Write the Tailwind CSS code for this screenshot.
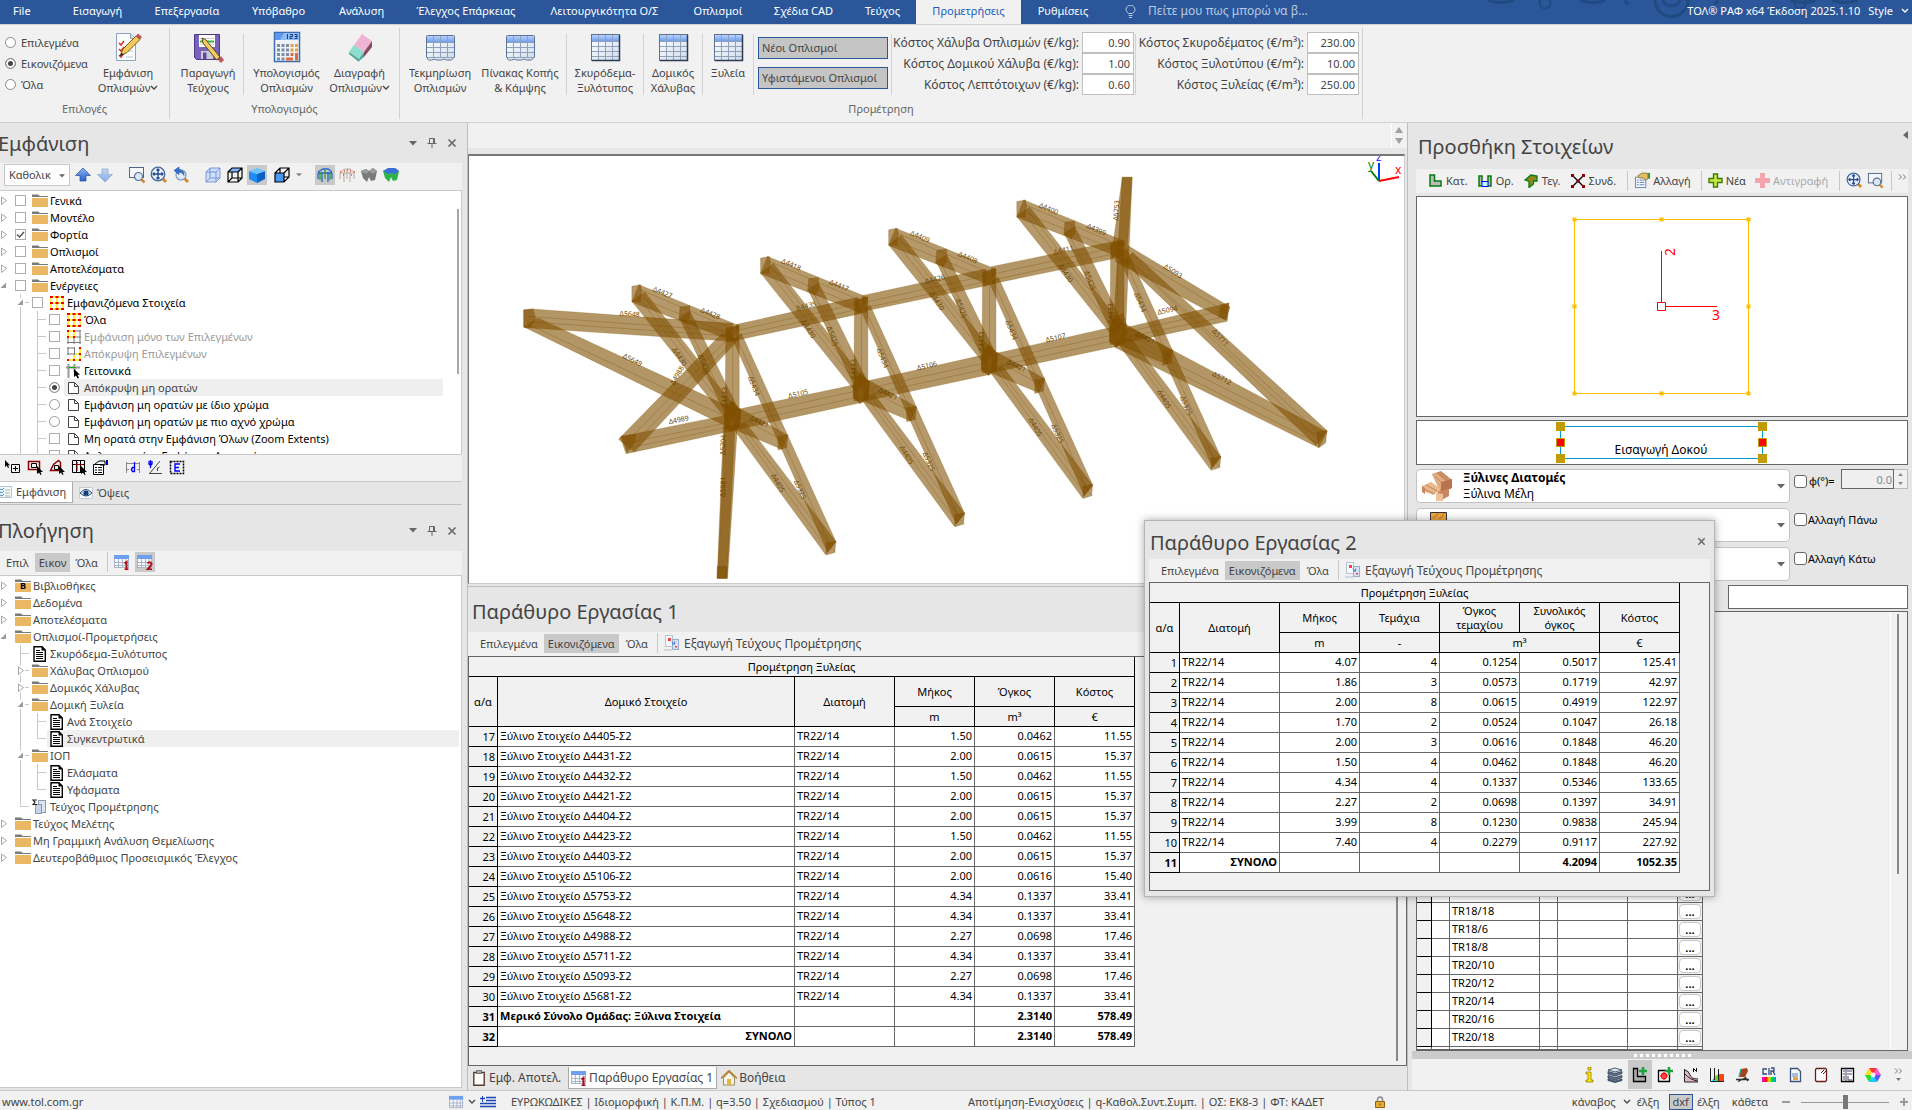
<!DOCTYPE html>
<html lang="el">
<head>
<meta charset="utf-8">
<title>ΤΟΛ ΡΑΦ</title>
<script src="https://cdn.jsdelivr.net/npm/@tailwindcss/browser@4"></script>
</head>
<body class="flex h-screen flex-col overflow-hidden bg-[#e6e6e6] font-['Noto_Sans','Open_Sans',sans-serif] text-[11px] leading-4 text-[#444]">

<svg class="absolute size-0" aria-hidden="true">
  <defs>
    <linearGradient id="gHead" x1="0" x2="0" y1="0" y2="1"><stop offset="0" stop-color="#b9d2fb"/><stop offset="1" stop-color="#6f9ff0"/></linearGradient>
    <linearGradient id="gCell" x1="0" x2="1" y1="0" y2="1"><stop offset="0" stop-color="#fff"/><stop offset="1" stop-color="#cfdcec"/></linearGradient>
    <linearGradient id="gBlue" x1="0" x2="0" y1="0" y2="1"><stop offset="0" stop-color="#8bb4f4"/><stop offset="1" stop-color="#2a62cc"/></linearGradient>
    <linearGradient id="gPale" x1="0" x2="0" y1="0" y2="1"><stop offset="0" stop-color="#c3d6f7"/><stop offset="1" stop-color="#86a8e2"/></linearGradient>
    <linearGradient id="gRain" x1="0" x2="1"><stop offset="0" stop-color="#f0f"/><stop offset=".3" stop-color="#f00"/><stop offset=".5" stop-color="#fd0"/><stop offset=".7" stop-color="#0d3"/><stop offset="1" stop-color="#09f"/></linearGradient>

    <symbol id="sheet" viewBox="0 0 32 32"><rect x="2.500" y="3.500" width="28" height="26" fill="url(#gCell)" stroke="#5d7393"/><rect x="3" y="4" width="27" height="6" fill="url(#gHead)"/><path d="M3 10.500h27M3 15.500h27M3 20.500h27M3 25.500h27M9.500 4v25M16.500 4v25M23.500 4v25" stroke="#8fa0b8" fill="none"/><path d="M30.500 4v25.500H3" stroke="#2c3c55" stroke-width="1.500" fill="none"/></symbol>
    <symbol id="sheetTorn" viewBox="0 0 32 32"><path d="M2.500 5.500q0-1 1-1h26q1 0 1 1V26l-3 3h-5l-2-1-3 1h-5l-2-1-3 1h-3l-2-3z" fill="url(#gCell)" stroke="#5d7393"/><path d="M3 5h27v6H3z" fill="url(#gHead)"/><path d="M3 11.500h27M3 16.500h27M3 21.500h27M3 26.500h27M9.500 5v21M16.500 5v21M23.500 5v21" stroke="#8fa0b8" fill="none"/></symbol>
    <symbol id="mini" viewBox="0 0 16 16"><rect x=".5" y="1.500" width="14" height="12" fill="#f7f9fc" stroke="#a9b4c6"/><path d="M0 1h15v4H0z" fill="#6f9ff0"/><path d="M0 8.500h15M0 11.500h15M4.500 5v9M8.500 5v9M12 5v9" stroke="#a9b4c6" fill="none"/></symbol>
    <symbol id="digit1" viewBox="0 0 16 16"><path d="M10.500 9.500L12.500 8v7.500M10.500 15.500h4" stroke="#b00d18" stroke-width="2" fill="none"/></symbol>
    <symbol id="digit2" viewBox="0 0 16 16"><path d="M10.500 9.500q2-2.500 4 0 0 2-4 6h4.500" stroke="#b00d18" stroke-width="2" fill="none"/></symbol>
    <symbol id="folder" viewBox="0 0 16 16"><path d="M0 1.500h6l2 1.500h8v1H0z" fill="#7a7a7a"/><path d="M0 5h16v9H0z" fill="#eab765"/></symbol>
    <symbol id="page" viewBox="0 0 16 16"><path d="M2.500 2.500h6l4 4v7h-10zM8.500 2.500v4h4" fill="#fff" stroke="#444" stroke-linejoin="round"/></symbol>
    <symbol id="doc" viewBox="0 0 16 16"><path d="M2 .7h8l3.300 3.300v11.300H2z" fill="#fff" stroke="#000" stroke-width="1.400"/><path d="M9.500.5v4h4z"/><path d="M4 4.500h4M4 6.500h7M4 8.500h7M4 10.500h7M4 12.500h7" stroke="#000"/></symbol>
    <symbol id="sumdoc" viewBox="0 0 16 16"><rect x="6.500" y="1.500" width="7" height="12" fill="#dce5ef" stroke="#8c9bb0"/><rect x="3.500" y="5.500" width="6" height="9" fill="#c5d4e6" stroke="#8c9bb0"/><path d="M5 1H1l2 2.300L1 5.500h4" fill="none" stroke="#222" stroke-width="1.200"/></symbol>
    <symbol id="gridY" viewBox="0 0 16 16"><path d="M1 2h14M1 8h14M1 14h14M2 1v14M8 1v14M14 1v14" stroke="#fbe800" stroke-width="1.500" fill="none"/><g fill="#e00"><path d="M1 1h3v2H1zM6.500 1h3v2h-3zM12 1h3v2h-3zM1 7h3v2H1zM6.500 7h3v2h-3zM12 7h3v2h-3zM1 13h3v2H1zM6.500 13h3v2h-3zM12 13h3v2h-3z"/></g></symbol>
    <symbol id="gridTL" viewBox="0 0 16 16"><path d="M8 2h7M1 13.500h14M2 8v7M8 8v7M14 1v14M8 8h7" stroke="#777" fill="none"/><path d="M1 2h7M1 8h7M2 1v7M8 1v7" stroke="#fbe800" stroke-width="1.500" fill="none"/><path d="M1 1h2v2H1zM7 1h2v2H7zM1 7h2v2H1zM7 7h2v2H7z" fill="#e00"/></symbol>
    <symbol id="gridBR" viewBox="0 0 16 16"><path d="M1 2h8M1 8h8M2 1v8M8.500 1v8" stroke="#777" fill="none"/><path d="M1 14h14M14 1v14M8 9v5M9 8h5" stroke="#fbe800" stroke-width="1.500" fill="none"/><path d="M13 1h2v2h-2zM13 7h2v2h-2zM1 13h2v2H1zM7 13h2v2H7zM13 13h2v2h-2z" fill="#e00"/></symbol>
    <symbol id="near" viewBox="0 0 16 16"><path d="M2.500 1v14M8.500 1v8M0 4.500h14" stroke="#999" stroke-width="2"/><path d="M3 4.500h6" stroke="#0a0"/><path d="M8 6v8l2-1.500 1.500 3 1.500-.7-1.500-3H14z" fill="#000"/></symbol>
    <symbol id="gv" viewBox="0 0 17 17"><path d="M8.500 0v17" stroke="#c8c8c8"/></symbol>
    <symbol id="gh" viewBox="0 0 17 17"><path d="M8.500 0v17M8.500 8.500H17" stroke="#c8c8c8" fill="none"/></symbol>
    <symbol id="gl" viewBox="0 0 17 17"><path d="M8.500 0v8.500H17" stroke="#c8c8c8" fill="none"/></symbol>
    <symbol id="gc" viewBox="0 0 17 17"><path d="M6.500 5v7.500l5-4z" fill="#fff" stroke="#a6a6a6"/></symbol>
    <symbol id="go" viewBox="0 0 17 17"><path d="M11 5.500V11H5.500z" fill="#9a9a9a"/></symbol>
    <symbol id="gC" viewBox="0 0 17 17"><path d="M8.500 0v3.500M8.500 13.500v4M13 8.500h4" stroke="#c8c8c8"/><path d="M6.500 5v7.500l5-4z" fill="#fff" stroke="#a6a6a6"/></symbol>
    <symbol id="gO" viewBox="0 0 17 17"><path d="M8.500 0v3.500M8.500 13v4M13 8.500h4" stroke="#c8c8c8"/><path d="M11 5.500V11H5.500z" fill="#9a9a9a"/></symbol>
    <symbol id="cross" viewBox="0 0 10 10"><path d="M1.500 1.500l7 7M8.500 1.500l-7 7" stroke="#666" stroke-width="1.600"/></symbol>
    <symbol id="pin" viewBox="0 0 10 12"><path d="M2.500 1.500h5v5h-5zM6.500 1.500v5M.5 6.500h9M5 7v4" stroke="#666" fill="none"/></symbol>
    <symbol id="tri" viewBox="0 0 8 5"><path d="M0 0h8L4 4.500z" fill="#666"/></symbol>
    <symbol id="chev" viewBox="0 0 8 6"><path d="M1 1l3 3 3-3" fill="none" stroke="currentColor" stroke-width="1.300"/></symbol>
    <symbol id="zoomfit" viewBox="0 0 18 18"><path d="M12 12l4 4" stroke="#d98a2b" stroke-width="3"/><circle cx="8" cy="8" r="6.800" fill="#e9f0fb" stroke="#47689c" stroke-width="1.300"/><path d="M8 3v10M3 8h10M6.500 4.500L8 3l1.500 1.500M6.500 11.500L8 13l1.500-1.500M4.500 6.500L3 8l1.500 1.500M11.500 6.500L13 8l-1.500 1.500" stroke="#234a8c" stroke-width="1.300" fill="none"/></symbol>
    <symbol id="zoomwin" viewBox="0 0 18 18"><rect x="1.500" y="1.500" width="14" height="10" fill="#f5f8fc" stroke="#4f6789"/><path d="M13 13l3.500 3.500" stroke="#d98a2b" stroke-width="2.500"/><circle cx="10.500" cy="10.500" r="4" fill="#dbe8f8" stroke="#5b7296" stroke-width="1.200"/></symbol>
    <symbol id="zoomprev" viewBox="0 0 18 18"><path d="M12 12l4 4" stroke="#d98a2b" stroke-width="3"/><circle cx="9" cy="9" r="5" fill="#e3edf9" stroke="#8095b5" stroke-width="1.200"/><path d="M2 4.500L7 1v2.500q5 0 5 6Q10.500 6 7 6v2.500z" fill="#3271cf" stroke="#1d4a99" stroke-width=".6"/></symbol>
    <symbol id="export" viewBox="0 0 16 16"><rect x="1.500" y=".5" width="7" height="11" fill="#f7f9fc" stroke="#b8c4d6"/><rect x="8.500" y="4.500" width="6" height="10" fill="#d3e0f2" stroke="#9aaeca"/><path d="M4 3h3v3H4zM11 11h2v1.500h-2z" fill="#e44"/><path d="M7.500 7l3 2M10.500 6.500V9H8" stroke="#4a7fd8" fill="none"/><path d="M0 15h8" stroke="#b5bfcc"/></symbol>
    <symbol id="props" viewBox="0 0 18 18"><rect x="1.500" y="5.500" width="11" height="11" fill="#f5f8fc" stroke="#7084a3"/><path d="M3 8.500h2M3 11h2M3 13.500h2M6 8.500h5M6 11h5M6 13.500h5" stroke="#5a82c0"/><path d="M4 4l5-3 6 .5V7l-3 2-2-3-4 .5z" fill="#e6bf63" stroke="#80622a" stroke-width=".8"/><path d="M14.500 1H17v6h-2.500z" fill="#4a8a3c"/></symbol>
  </defs>
</svg>

<!-- Menu bar -->
<nav class="relative flex h-6 shrink-0 items-stretch bg-[#2b579a] pb-[2px] text-white">
  <svg class="absolute right-0 top-0 h-6 w-[460px]" viewBox="0 0 460 24" fill="none" stroke="#1f4a82" stroke-width="3"><path d="M36 0q12 5 26 0M128 0q12 5 26 0M338 0q12 5 26 0M380 0q12 5 26 0" /><circle cx="93" cy="3" r="5.500" stroke-width="2"/><circle cx="348" cy="3" r="5.500" stroke-width="2"/><path d="M203 0a16 16 0 0 0 33 0M211 0a9 9 0 0 0 17 0M173 0q1 4 4 3M262 3q4 0 3-3"/></svg>
  <button class="w-14 pl-[13px] text-left">File</button>
  <button class="w-[83px]">Εισαγωγή</button>
  <button class="w-24">Επεξεργασία</button>
  <button class="w-[87px]">Υπόβαθρο</button>
  <button class="w-[79px]">Ανάλυση</button>
  <button class="w-[130px]">Έλεγχος Επάρκειας</button>
  <button class="w-[147px]">Λειτουργικότητα Ο/Σ</button>
  <button class="w-20">Οπλισμοί</button>
  <button class="w-[91px]">Σχέδια CAD</button>
  <button class="w-[67px]">Τεύχος</button>
  <button class="-mb-[2px] w-[105px] bg-[#f1f1f1] pb-[2px] text-[#2060b8]">Προμετρήσεις</button>
  <button class="w-[84px]">Ρυθμίσεις</button>
  <label class="ml-5 flex items-center gap-3 text-[12px] text-[#b9c9e2]">
    <svg class="h-[13px] w-[11px]" viewBox="0 0 11 13" fill="none" stroke="#b9c9e2"><path d="M3.500 8.500Q1 6.500 1 4.700a4.400 4.400 0 0 1 9 0q0 1.800-2.500 3.800zM3.500 10.500h4M4 12.500h3"/></svg>
    <input class="w-48 bg-transparent outline-none placeholder:text-[#b9c9e2]" placeholder="Πείτε μου πως μπορώ να β..." aria-label="Αναζήτηση εντολής">
  </label>
  <div class="relative ml-auto flex items-center gap-2 pr-[3px]"><span>ΤΟΛ® ΡΑΦ x64 Έκδοση 2025.1.10</span><button class="flex items-center gap-2">Style <svg class="h-[6px] w-2"><use href="#chev"/></svg></button></div>
</nav>

<!-- Ribbon -->
<section class="flex h-[99px] shrink-0 border-y border-[#d0d0d0] bg-[#f1f1f1]">
  <div class="my-[3px] flex w-[170px] flex-col border-r border-[#d2d2d2]">
    <div class="flex h-[73px]">
      <fieldset class="w-24 pt-1 pl-[5px]">
        <label class="flex h-[21px] items-center gap-[5px]"><input type="radio" name="scope" class="size-[11px] appearance-none rounded-full border border-[#8a8a8a] bg-white checked:bg-[#444] checked:shadow-[inset_0_0_0_2px_#fff]">Επιλεγμένα</label>
        <label class="flex h-[21px] items-center gap-[5px]"><input type="radio" name="scope" checked class="size-[11px] appearance-none rounded-full border border-[#8a8a8a] bg-white checked:bg-[#444] checked:shadow-[inset_0_0_0_2px_#fff]">Εικονιζόμενα</label>
        <label class="flex h-[21px] items-center gap-[5px]"><input type="radio" name="scope" class="size-[11px] appearance-none rounded-full border border-[#8a8a8a] bg-white checked:bg-[#444] checked:shadow-[inset_0_0_0_2px_#fff]">Όλα</label>
      </fieldset>
      <button class="flex w-16 flex-col items-center justify-start pt-[3px] leading-[15px]">
        <svg class="mb-[2px] size-8" viewBox="0 0 32 32"><path d="M4.500 2.500h14l5 5v22h-19z" fill="#fbfcfe" stroke="#8ea3bd"/><path d="M18.500 2.500v5h5" fill="#d5e0ee" stroke="#8ea3bd"/><path d="M7 12l2 2 3-4M7 18l2 2 3-4M7 24l2 2 3-4" stroke="#d33" stroke-width="1.600" fill="none"/><path d="M14 14h7M14 20h7M14 26h7" stroke="#b7c5d6"/><path d="M8 25l3-7L24 5l4 3.500L15 21.500z" fill="#f3c95c" stroke="#7a5a16"/><path d="M24 5l2-2.500 4 3.500-2 2.500z" fill="#c4505a"/><path d="M8 25l1.500-3.300 2.200 1.800z" fill="#222"/></svg>
        <span>Εμφάνιση</span><span class="flex items-center whitespace-nowrap">Οπλισμών<svg class="h-[6px] w-2"><use href="#chev"/></svg></span>
      </button>
    </div>
    <div class="text-center text-[#666]">Επιλογές</div>
  </div>
  <div class="my-[3px] flex w-[230px] flex-col border-r border-[#d2d2d2]">
    <div class="flex h-[73px]">
      <button class="ml-[3px] flex w-[70px] flex-col items-center justify-start pt-[3px] leading-[15px]">
        <svg class="mb-[2px] size-8" viewBox="0 0 32 32"><path d="M2.500 3.500h25v25h-23l-2-2z" fill="#7a63b8" stroke="#4d3a86"/><path d="M7 4h16v12H7z" fill="#fff"/><path d="M8 7.500h14M8 13h14" stroke="#c9c9d4"/><path d="M8 9.500h14v2H8z" fill="#3db53d"/><path d="M9 20h12v8H9z" fill="#c9cbd8"/><path d="M11 21.500h3.500V28H11z" fill="#5d4a99"/><path d="M10 7l4 2 14 17-3.500 3L11 12z" fill="#f0cc62" stroke="#5d4716"/><path d="M26 29l3 3 3-3-3-4z" fill="#b85a62"/></svg>
        <span>Παραγωγή</span><span>Τεύχους</span>
      </button>
      <div class="mt-[6px] h-[61px] w-px bg-[#d2d2d2]"></div>
      <button class="ml-[6px] flex w-[73px] flex-col items-center justify-start whitespace-nowrap pt-[3px] leading-[15px]">
        <svg class="mb-[2px] size-8" viewBox="0 0 32 32"><rect x="3.500" y="1.500" width="25" height="29" fill="#eef3fa" stroke="#3f6db3" stroke-width="1.500"/><path d="M4 2h24v7H4z" fill="#5b98ee"/><path d="M13 2h15v7H9z" fill="#8ebcf8"/><path d="M16.500 3v5M19 3.500h2.500v2H19v2h2.500M23.500 3.500H26v4h-2.500M24 5.500h2" stroke="#1b3a78" fill="none"/><g fill="#7c8ea6"><path d="M6 13h3v3H6zM10.500 13h3v3h-3zM6 17.500h3v3H6zM10.500 17.500h3v3h-3zM6 22h3v3H6zM10.500 22h3v3h-3zM15 17.500h3v3h-3zM15 13h3v3h-3zM15 22h3v3h-3z"/></g><path d="M19.500 13h3v3h-3zM24 13h3v3h-3zM19.500 17.500h3v3h-3zM24 17.500h3v3h-3z" fill="#ef9d3e"/><path d="M6 26.500h3v3H6zM10.500 26.500h3v3h-3z" fill="#7c8ea6"/><path d="M15 26.500h7v3h-7zM24 22h3v7.500h-3zM19.500 22h3v3h-3z" fill="#dd6a44"/></svg>
        <span>Υπολογισμός</span><span>Οπλισμών</span>
      </button>
      <button class="flex w-[73px] flex-col items-center justify-start whitespace-nowrap pt-[3px] leading-[15px]">
        <svg class="mb-[2px] size-8" viewBox="0 0 32 32"><path d="M18 3l10 7-8 11-10-7z" fill="#efb4d3"/><path d="M28 10v6l-8 10v-5z" fill="#8a4a5e"/><path d="M10 14l10 7-5 7-10-7z" fill="#8edccd"/><path d="M20 21v5l-5 4v-2zM5 21l10 7v3L5 23z" fill="#4fa595"/></svg>
        <span>Διαγραφή</span><span class="flex items-center">Οπλισμών<svg class="h-[6px] w-2"><use href="#chev"/></svg></span>
      </button>
    </div>
    <div class="text-center text-[#666]">Υπολογισμός</div>
  </div>
  <div class="my-[3px] flex w-[963px] flex-col border-r border-[#d2d2d2]">
    <div class="flex h-[73px]">
      <button class="flex w-20 flex-col items-center justify-start whitespace-nowrap pt-[3px] leading-[15px]"><svg class="mb-[2px] size-8"><use href="#sheetTorn"/></svg><span>Τεκμηρίωση</span><span>Οπλισμών</span></button>
      <button class="mr-[6px] flex w-20 flex-col items-center justify-start whitespace-nowrap pt-[3px] leading-[15px]"><svg class="mb-[2px] size-8"><use href="#sheetTorn"/></svg><span>Πίνακας Κοπής</span><span>&amp; Κάμψης</span></button>
      <div class="mt-[6px] h-[61px] w-px bg-[#d2d2d2]"></div>
      <button class="flex w-19 flex-col items-center justify-start whitespace-nowrap pt-[3px] leading-[15px]"><svg class="mb-[2px] size-8"><use href="#sheet"/></svg><span>Σκυρόδεμα-</span><span>Ξυλότυπος</span></button>
      <div class="mt-[6px] h-[61px] w-px bg-[#d2d2d2]"></div>
      <button class="flex w-[58px] flex-col items-center justify-start whitespace-nowrap pt-[3px] leading-[15px]"><svg class="mb-[2px] size-8"><use href="#sheet"/></svg><span>Δομικός</span><span>Χάλυβας</span></button>
      <div class="mt-[6px] h-[61px] w-px bg-[#d2d2d2]"></div>
      <button class="flex w-[50px] flex-col items-center justify-start pt-[3px] leading-[15px]"><svg class="mb-[2px] size-8"><use href="#sheet"/></svg><span>Ξυλεία</span></button>
      <div class="mt-[6px] h-[61px] w-px bg-[#d2d2d2]"></div>
      <div class="mr-[3px] ml-1 flex w-[130px] flex-col gap-2 pt-[9px]">
        <button class="h-[22px] border border-[#2b579a] bg-[#c5c5c5] px-[3px] text-left whitespace-nowrap">Νέοι Οπλισμοί</button>
        <button class="h-[22px] border border-[#2b579a] bg-[#c5c5c5] px-[3px] text-left whitespace-nowrap">Υφιστάμενοι Οπλισμοί</button>
      </div>
      <div class="mt-[6px] h-[61px] w-px bg-[#d2d2d2]"></div>
      <div class="flex w-[242px] flex-col pt-1 text-[12px]">
        <label class="flex h-[21px] items-center justify-end gap-[3px] whitespace-nowrap">Κόστος Χάλυβα Οπλισμών (€/kg):<input value="0.90" class="h-[21px] w-[52px] border border-[#c0c0c0] bg-white px-[3px] text-right text-[11px]"></label>
        <label class="flex h-[21px] items-center justify-end gap-[3px] whitespace-nowrap">Κόστος Δομικού Χάλυβα (€/kg):<input value="1.00" class="h-[21px] w-[52px] border border-[#c0c0c0] bg-white px-[3px] text-right text-[11px]"></label>
        <label class="flex h-[21px] items-center justify-end gap-[3px] whitespace-nowrap">Κόστος Λεπτότοιχων (€/kg):<input value="0.60" class="h-[21px] w-[52px] border border-[#c0c0c0] bg-white px-[3px] text-right text-[11px]"></label>
      </div>
      <div class="mt-[6px] ml-px h-[61px] w-px bg-[#d2d2d2]"></div>
      <div class="flex w-[223px] flex-col pt-1 text-[12px]">
        <label class="flex h-[21px] items-center justify-end gap-[3px] whitespace-nowrap">Κόστος Σκυροδέματος (€/m³):<input value="230.00" class="h-[21px] w-[52px] border border-[#c0c0c0] bg-white px-[3px] text-right text-[11px]"></label>
        <label class="flex h-[21px] items-center justify-end gap-[3px] whitespace-nowrap">Κόστος Ξυλοτύπου (€/m²):<input value="10.00" class="h-[21px] w-[52px] border border-[#c0c0c0] bg-white px-[3px] text-right text-[11px]"></label>
        <label class="flex h-[21px] items-center justify-end gap-[3px] whitespace-nowrap">Κόστος Ξυλείας (€/m³):<input value="250.00" class="h-[21px] w-[52px] border border-[#c0c0c0] bg-white px-[3px] text-right text-[11px]"></label>
      </div>
    </div>
    <div class="text-center text-[#666]">Προμέτρηση</div>
  </div>
</section>

<main class="relative flex min-h-0 flex-1">
  <!-- Left dock -->
  <aside class="flex w-[468px] shrink-0 flex-col overflow-hidden border-r border-[#bdbdbd] pr-[5px]">
    <div class="flex h-10 shrink-0 items-center">
      <h2 class="-ml-[2px] flex-1 pt-[2px] text-[20px]">Εμφάνιση</h2>
      <button class="px-[5px]" aria-label="Μενού"><svg class="h-[5px] w-2"><use href="#tri"/></svg></button>
      <button class="px-[5px]" aria-label="Καρφίτσωμα"><svg class="h-3 w-[10px]"><use href="#pin"/></svg></button>
      <button class="px-[5px]" aria-label="Κλείσιμο"><svg class="size-[10px]"><use href="#cross"/></svg></button>
    </div>
    <div class="flex h-[27px] shrink-0 items-center bg-[#f1f1f1] pb-[3px] pl-1">
      <span class="relative"><select aria-label="Προβολή" class="h-[22px] w-[66px] appearance-none overflow-hidden border border-[#c6c6c6] bg-white pl-1"><option>Καθολικ</option></select><svg class="absolute top-[10px] right-[5px] h-[4px] w-[6px]" viewBox="0 0 8 5"><path d="M0 0h8L4 4.500z" fill="#666"/></svg></span>
      <button class="ml-[5px]" aria-label="Πάνω"><svg class="size-4" viewBox="0 0 16 16"><path d="M8 1l7.500 7.500H11V14H5V8.500H.5z" fill="url(#gBlue)" stroke="#27509c" stroke-width=".7"/></svg></button>
      <button class="ml-[6px]" aria-label="Κάτω"><svg class="size-4" viewBox="0 0 16 16"><path d="M8 15L.5 7.500H5V2h6v5.500h4.500z" fill="url(#gPale)" stroke="#8aa4cf" stroke-width=".7"/></svg></button>
      <button class="ml-[15px]" aria-label="Μεγέθυνση παραθύρου"><svg class="size-[18px]"><use href="#zoomwin"/></svg></button>
      <button class="ml-1" aria-label="Όλα στην οθόνη"><svg class="size-[18px]"><use href="#zoomfit"/></svg></button>
      <button class="ml-1" aria-label="Προηγούμενη"><svg class="size-[18px]"><use href="#zoomprev"/></svg></button>
      <button class="ml-[15px]" aria-label="Διαφανές"><svg class="size-4" viewBox="0 0 16 16"><path d="M1 5l4-4h10v10l-4 4H1z" fill="#cfdffa"/><path d="M1 5l4-4h10v10l-4 4H1zM1 5h10v10M11 5l4-4M5 1v10L1 15M5 11h10" stroke="#5f86cf" fill="none" stroke-width=".8"/></svg></button>
      <button class="ml-[6px]" aria-label="Πλέγμα"><svg class="size-4" viewBox="0 0 16 16"><path d="M1 5l4-4h10l-4 4z" fill="#7fb2ff"/><path d="M1 5l4-4h10v10l-4 4H1zM1 5h10v10M11 5l4-4M5 5v6L1 15M5 11h10" stroke="#000" fill="none" stroke-width="1.200"/></svg></button>
      <button class="ml-1 bg-[#c9c9c9] p-[2px]" aria-label="Στερεό"><svg class="size-4" viewBox="0 0 16 16"><path d="M0 4l8 3v9l-8-4z" fill="#1e8cf5"/><path d="M8 7l8-3v8l-8 4z" fill="#0b62c9"/><path d="M0 4l8-3 8 3-8 3z" fill="#6cc3ff"/></svg></button>
      <button class="ml-[7px]" aria-label="Όψη"><svg class="size-4" viewBox="0 0 16 16"><path d="M1 6h9v9H1z" fill="#4a97f5"/><path d="M1 6l5-5h9v9l-5 5H1zM1 6h9v9M10 6l5-5M6 1v5M10 10h5" stroke="#000" fill="none" stroke-width="1.200"/></svg></button>
      <svg class="ml-[6px] h-[4px] w-[6px]" viewBox="0 0 8 5"><path d="M0 0h8L4 4.500z" fill="#888"/></svg>
      <button class="ml-[13px] bg-[#c9c9c9] p-[2px]" aria-label="Μοντέλο"><svg class="size-4" viewBox="0 0 16 16" fill="none"><path d="M1 5l5-3h5l4 3M1 6v6M5 5v10M11 5v10M15 6v6M1 6h14" stroke="#2b62c8" stroke-width="1.300"/><path d="M8 3v9M3 5v8M13 5v8" stroke="#2ba02b" stroke-width="1.300"/></svg></button>
      <button class="ml-1" aria-label="Σκελετός"><svg class="size-4" viewBox="0 0 16 16" fill="none"><path d="M1 5l5-3h5l4 3M1 6v6M5 5v10M11 5v10M15 6v6M1 6h14M8 3v9" stroke="#b9a79f"/><path d="M1 5h1M5 4h1M11 4h1M15 5h1M8 3h1M4 8h1M12 8h1" stroke="#e8552b" stroke-width="1.600"/></svg></button>
      <button class="ml-[6px]" aria-label="Γκρι"><svg class="size-4" viewBox="0 0 16 16"><path d="M0 4l5-2 3 2 4-3 4 3-2 9-4 1-2-4-2 5-4-4z" fill="#7a7a7a"/><path d="M0 4l5-2 3 2-3 3zM8 4l4-3 4 3-4 3z" fill="#9b9b9b"/></svg></button>
      <button class="ml-[6px]" aria-label="Χρώμα"><svg class="size-4" viewBox="0 0 16 16"><path d="M0 4l5-2 3 2 4-3 4 3-2 9-4 1-2-4-2 5-4-4z" fill="#2fb44a"/><path d="M0 4l5-3h7l4 3-4 3-4-1-3 1z" fill="#3a6fd8"/></svg></button>
    </div>
    <div class="relative h-[265px] shrink-0 overflow-hidden border border-l-0 border-[#c8c8c8] bg-white pt-px text-black">
      <ul id="treeView" class="-ml-[5px]"></ul>
      <div class="absolute top-[18px] right-[2px] h-[165px] w-[2px] bg-[#a8a8a8]"></div>
    </div>
    <div class="flex h-[27px] shrink-0 items-center border-b border-[#c8c8c8] bg-[#f1f1f1] pb-[3px] pl-1">
      <button aria-label="Επιλογή"><svg class="size-4" viewBox="0 0 16 16"><path d="M1 1v7l1.700-1.500L4 9l1-.5L4 6.200h2z"/><path d="M7.500 5.500h8v8h-8zM11.500 7v5M9 9.500h5" fill="none" stroke="#000"/></svg></button>
      <button class="ml-[7px]" aria-label="Παράθυρο"><svg class="size-4" viewBox="0 0 16 16" fill="none"><path d="M1.500 2.500h11v8h-11z" stroke="#8b0000" stroke-width="1.500"/><path d="M4.500 4.500h5v4h-5z" stroke="#000"/><path d="M10 7v8l2-1.500 1.500 2.500 1-.5-1-2.500H16z" fill="#000"/></svg></button>
      <button class="ml-[6px]" aria-label="Πολύγωνο"><svg class="size-4" viewBox="0 0 16 16" fill="none"><path d="M1.500 11.500l3-6 5-4 2 2v8z" stroke="#8b0000" stroke-width="1.500"/><path d="M5.500 6.500h4v4h-4z" stroke="#000"/><path d="M10 7v8l2-1.500 1.500 2.500 1-.5-1-2.500H16z" fill="#000"/></svg></button>
      <button class="ml-[6px]" aria-label="Τομή"><svg class="size-4" viewBox="0 0 16 16" fill="none"><path d="M1.500 1.500h12v12h-12zM5.500 1v13M9.500 1v13M1 5.500h13" stroke="#000"/><path d="M4 5.500h8M6 3v9" stroke="#8b0000"/><path d="M10 7v8l2-1.500 1.500 2.500 1-.5-1-2.500H16z" fill="#000"/></svg></button>
      <button class="ml-[5px]" aria-label="Ιδιότητες"><svg class="size-4" viewBox="0 0 16 16" fill="none"><path d="M1.500 5.500h10v10h-10z" fill="#fff" stroke="#000"/><path d="M3 8.500h2M3 11h2M3 13.500h2M6 8.500h4M6 11h4M6 13.500h4M3 5l4-3h6v4H8" stroke="#000"/><path d="M14 1h2v5h-2z" fill="#00a"/></svg></button>
      <button class="ml-[17px]" aria-label="Διάσταση"><svg class="size-4" viewBox="0 0 16 16" fill="none"><path d="M1.500 3v11M14.500 3v11M1 4.500h14M2 10.500h2M12 10.500h2" stroke="#888"/><path d="M9.500 3v9.500H7.500q-2-2 0-4h2" stroke="#00f" stroke-width="1.300"/></svg></button>
      <button class="ml-[6px]" aria-label="Γωνία"><svg class="size-4" viewBox="0 0 16 16" fill="none"><path d="M2 2v3q1.500 2 3 0V2M3.500 1v8" stroke="#00f" stroke-width="1.300"/><path d="M2 14.500h13M3 14L13 2M10.500 12v-3l2-1" stroke="#444"/></svg></button>
      <button class="ml-[6px]" aria-label="Επεξεργασία"><svg class="size-4" viewBox="0 0 16 16" fill="none"><path d="M1.500 2.500h13v12h-13z" stroke="#000" stroke-width="1.500" stroke-dasharray="2 1"/><path d="M11 5H6v7h5M6 8.500h4" stroke="#00f" stroke-width="1.400"/></svg></button>
    </div>
    <div class="flex h-[23px] shrink-0 border-b border-[#c0c0c0] pb-px">
      <button class="flex w-[73px] items-center gap-1 border-r border-b border-[#aaa] bg-white"><svg class="h-3 w-3" viewBox="0 0 12 12"><path d="M0 .5h11.500v11H0" fill="#f4f8fc" stroke="#b5c2d0"/><path d="M0 3l2 1 2-2M0 6l2 1 2-2M0 9l2 1 2-2" stroke="#3b87c8" fill="none"/><path d="M5 4h5M5 7h5M5 10h5" stroke="#9cc0a8"/></svg>Εμφάνιση</button>
      <button class="flex items-center gap-1 pl-[6px]"><svg class="h-3 w-[14px]" viewBox="0 0 14 12"><path d="M.5.5h13v11H.5z" fill="#f6f8fa" stroke="#c5ccd4"/><path d="M1 6q6-7 12 0-6 6-12 0z" fill="#cfe2f4" stroke="#2b4f7a"/><circle cx="7" cy="6" r="2.600" fill="#123f78"/></svg>Όψεις</button>
    </div>

    <div class="flex h-[46px] shrink-0 items-center pt-[5px]">
      <h2 class="-ml-[2px] flex-1 text-[20px]">Πλοήγηση</h2>
      <button class="px-[5px]" aria-label="Μενού"><svg class="h-[5px] w-2"><use href="#tri"/></svg></button>
      <button class="px-[5px]" aria-label="Καρφίτσωμα"><svg class="h-3 w-[10px]"><use href="#pin"/></svg></button>
      <button class="px-[5px]" aria-label="Κλείσιμο"><svg class="size-[10px]"><use href="#cross"/></svg></button>
    </div>
    <div class="flex h-6 shrink-0 items-center bg-[#f1f1f1] pb-[2px] pl-[6px] leading-[19px]">
      <button>Επιλ</button><button class="ml-[6px] bg-[#c9c9c9] px-1">Εικον</button><button class="ml-[5px]">Όλα</button>
      <div class="ml-[9px] h-5 w-px bg-[#c8c8c8]"></div>
      <button class="relative ml-[6px]" aria-label="Παράθυρο 1"><svg class="size-4"><use href="#mini"/><use href="#digit1"/></svg></button>
      <button class="ml-[5px] bg-[#c9c9c9] p-[2px]" aria-label="Παράθυρο 2"><svg class="size-4"><use href="#mini"/><use href="#digit2"/></svg></button>
    </div>
    <div class="mb-[2px] min-h-0 flex-1 overflow-hidden border border-l-0 border-[#c8c8c8] bg-white pt-px">
      <ul id="treeNav" class="-ml-[5px]"></ul>
    </div>
  </aside>

  <!-- Centre -->
  <section class="flex min-w-0 flex-1 flex-col">
    <div class="flex h-[25px] shrink-0 justify-end bg-[#f1f1f1]">
      <div class="mr-px flex w-[15px] flex-col items-center justify-between border-l border-white py-1"><svg class="h-[6px] w-2" viewBox="0 0 8 6"><path d="M4 0l4 6H0z" fill="#a0a0a0"/></svg><svg class="h-[6px] w-2" viewBox="0 0 8 6"><path d="M4 6l4-6H0z" fill="#a0a0a0"/></svg></div>
    </div>
    <div class="relative mt-[6px] mr-[2px] h-[430px] shrink-0 border border-t-2 border-[#777] border-r-[#ccc] border-b-[#ccc] bg-white">
      <svg class="absolute inset-0 h-full w-full" viewBox="-53 108 1613 1284" preserveAspectRatio="none" fill="#805000">
        <defs>
          <g id="truss">
            <g fill-opacity=".58" stroke="#805000" stroke-opacity=".6" stroke-width="1">
              <path d="M240 495L412 618L402 665L228 547z"/>
              <path d="M228 545L250 516L408 868L391 900z"/>
              <path d="M402 925L424 909L580 1268L562 1306z"/>
              <path d="M310 595L328 574L412 870L394 900z"/>
              <path d="M402 660L417 642L580 1268L566 1300z"/>
              <path d="M415 868L497 948L487 990L402 928z"/>
              <path d="M390 625L413 618L413 925L389 930z"/>
              <path d="M228 500L243 495L245 515L242 548L228 545z"/>
              <path d="M311 562L328 558L328 595L322 612L309 600z"/>
              <path d="M480 950L497 946L495 985L480 992z"/>
              <path d="M563 1272L580 1266L578 1300L563 1308z"/>
              <path d="M388 880L400 845L416 872L414 920L400 937L388 920z"/>
              <path d="M388 880L400 845L416 872L414 920L400 937L388 920z"/>
              <path d="M390 630L413 616L411 662L392 668z"/>
            </g>
            <g fill="none" stroke="#805000" stroke-opacity=".7" stroke-width="1">
              <path d="M236 530L405 650M243 510L410 635M242 540L395 880M246 525L402 875M318 600L400 880M410 660L570 1280M410 915L565 1290M415 910L572 1280M405 885L490 965M402 640V920M562 1270L580 1300"/>
            </g>
          </g>
        </defs>
        <g fill-opacity=".6" stroke="#805000" stroke-opacity=".6">
          <path d="M408 615L618 533L622 582L408 662z"/><path d="M625 528L838 448L842 497L628 575z"/><path d="M848 441L1068 362L1072 412L850 492z"/>
          <path d="M208 952L390 888L400 935L218 1003z"/><path d="M402 873L615 795L622 850L405 932z"/><path d="M625 788L838 705L845 765L630 845z"/><path d="M848 705L1058 622L1065 680L850 760z"/><path d="M1078 625L1258 550L1255 605L1078 670z"/>
          <path d="M42 572L55 568L402 612L400 665L42 624z"/><path d="M42 622L66 595L408 872L396 925z"/><path d="M205 960L384 640L412 660L232 998z"/>
          <path d="M386 920L410 920L393 1378L375 1378z"/><path d="M388 920L406 920L392 1378L376 1378z"/>
          <path d="M1074 172L1091 172L1083 375L1058 375z"/><path d="M1074 172L1091 172L1080 620L1058 640z"/>
          <path d="M1068 364L1084 378L1260 562L1252 602L1062 425z"/><path d="M1076 425L1092 398L1428 935L1408 978z"/><path d="M1060 682L1085 622L1427 938L1413 985z"/>
          <path d="M1058 600L1075 580L1084 630L1078 670L1062 680z"/>
          <path d="M41 570L58 568L62 600L52 625L41 622z"/><path d="M1245 555L1258 550L1254 600L1240 590z"/><path d="M1409 938L1427 933L1425 970L1413 985z"/><path d="M210 950L235 945L232 970L220 1000z"/><path d="M375 1342h17v36h-17z"/>
        </g>
        <g fill="none" stroke="#805000" stroke-opacity=".7">
          <path d="M410 632L1068 380M410 648L1070 398M215 972L400 908M218 988L402 920M405 895L1060 645M405 915L1062 662M1075 640L1255 570M1075 655L1255 590M48 590L400 635M48 606L400 650M50 615L400 900M215 975L395 655M225 985L405 660M1070 385L1255 580M1080 410L1420 950M1070 650L1420 955M1068 670L1415 975M1085 420L1412 960"/>
        </g>
        <use href="#truss"/><use href="#truss" x="222" y="-85"/><use href="#truss" x="443" y="-170"/><use href="#truss" x="664" y="-255"/>
      </svg>
      <svg id="beamLabels" class="absolute inset-0 h-full w-full text-[7px]" viewBox="0 0 936 428" fill="#6b4400"></svg>
      <svg class="absolute top-0 right-0 h-8 w-10 text-[12px]" viewBox="0 0 40 32" fill="none" stroke-width="2"><path d="M15 25V7" stroke="#0040ff"/><path d="M15 25L7 15" stroke="#008000"/><path d="M15 25l20-4" stroke="#f00"/><text x="12" y="5" fill="#22f">z</text><text x="4" y="13" fill="#008000">y</text><text x="31" y="18" fill="#f00">x</text></svg>
    </div>

    <section class="mt-[2px] flex min-h-0 flex-1 flex-col border-t border-[#bdbdbd]">
      <h2 class="h-[45px] shrink-0 pt-1 pl-1 text-[20px] leading-[42px]">Παράθυρο Εργασίας 1</h2>
      <div class="flex h-6 shrink-0 items-center bg-[#f1f1f1] pb-[2px] pl-3 leading-[19px]">
        <button>Επιλεγμένα</button><button class="ml-[6px] bg-[#c9c9c9] px-1">Εικονιζόμενα</button><button class="ml-[7px]">Όλα</button>
        <div class="mr-[6px] ml-[9px] h-5 w-px bg-[#c8c8c8]"></div>
        <button class="flex items-center gap-1 text-[12px]"><svg class="size-4"><use href="#export"/></svg>Εξαγωγή Τεύχους Προμέτρησης</button>
      </div>
      <div class="relative min-h-0 flex-1 overflow-hidden border border-t-0 border-l-0 border-[#666] bg-[#f1f1f1]">
        <table id="tblA" class="w-[666px] table-fixed border-collapse text-black"></table>
        <div class="absolute inset-x-0 top-0 h-px bg-[#666]"></div>
        <div class="absolute inset-y-0 left-0 w-px bg-[#666]"></div>
        <div class="absolute top-px right-2 bottom-1 w-[2px] bg-[#888]"></div>
      </div>
      <div class="mt-px flex h-[23px] shrink-0 items-start text-[12px]">
        <button class="flex h-[21px] items-center gap-1 pr-[7px] pl-[5px]"><svg class="h-4 w-3" viewBox="0 0 12 16"><path d="M.8 2.500h10.400v12.700H.8z" fill="#fff" stroke="#5b3a2b" stroke-width="1.400"/><path d="M3.500.5h5v3h-5z" fill="#aaa" stroke="#444" stroke-width=".6"/></svg>Εμφ. Αποτελ.</button>
        <button class="flex h-[22px] items-center gap-[2px] border border-t-0 border-[#aaa] bg-white pr-[3px] pl-[2px]"><svg class="size-4"><use href="#mini"/><use href="#digit1"/></svg>Παράθυρο Εργασίας 1</button>
        <button class="flex h-[21px] items-center gap-[2px] pl-1"><svg class="size-4" viewBox="0 0 16 16"><path d="M2.500 8v7h11V8L8 2z" fill="#f6f3e7" stroke="#9a8c66"/><path d="M0 8.500L8 .8l8 7.700" stroke="#b5862c" stroke-width="1.700" fill="none"/><path d="M6 9h4v6H6z" fill="#e5b54c"/></svg>Βοήθεια</button>
      </div>
    </section>
  </section>

  <!-- Right dock -->
  <aside class="flex w-[505px] shrink-0 flex-col border-l border-[#bdbdbd]">
    <div class="flex h-[46px] shrink-0 justify-between pr-1 pl-[10px]"><h2 class="text-[20px] leading-[48px]">Προσθήκη Στοιχείων</h2><svg class="mt-2 h-2 w-[5px]" viewBox="0 0 5 8"><path d="M5 0v8L0 4z" fill="#666"/></svg></div>
    <div class="ml-2 mr-1 flex h-6 shrink-0 items-center bg-[#f1f1f1] pb-px pl-[13px] whitespace-nowrap">
      <button class="flex items-center gap-1"><svg class="size-[13px]" viewBox="0 0 13 13"><path d="M1 1h4.500v6H12v5H1z" fill="#bbb" stroke="#077a0f" stroke-width="1.500"/></svg>Κατ.</button>
      <button class="ml-[10px] flex items-center gap-1"><svg class="size-[14px]" viewBox="0 0 14 13"><path d="M1 1.500h3v6h6v-6h3v10H1z" fill="#bbb" stroke="#077a0f" stroke-width="1.500"/><path d="M4 7h6v5H4z" fill="#bff" stroke="#00f"/></svg>Ορ.</button>
      <button class="ml-[10px] flex items-center gap-1"><svg class="size-[14px]" viewBox="0 0 14 14"><path d="M1 6l6-5 6 1v5H9.500v3L5 13.500V7.500z" fill="#8a8a1c" stroke="#077a0f" stroke-width="1.300"/></svg>Τεγ.</button>
      <button class="ml-[10px] flex items-center gap-1"><svg class="size-[14px]" viewBox="0 0 14 14"><path d="M1 1l12 12M13 1L1 13" stroke="#000" stroke-width="1.400"/><path d="M0 0h3v3H0zM11 0h3v3h-3zM0 11h3v3H0zM11 11h3v3h-3zM5.500 5.500h3v3h-3z" fill="#8b0000"/></svg>Συνδ.</button>
      <div class="mr-[6px] ml-[11px] h-5 w-px bg-[#c8c8c8]"></div>
      <button class="flex items-center gap-[2px]"><svg class="size-[17px]"><use href="#props"/></svg>Αλλαγή</button>
      <div class="mr-[6px] ml-[10px] h-5 w-px bg-[#c8c8c8]"></div>
      <button class="flex items-center gap-[3px]"><svg class="size-[15px]" viewBox="0 0 15 15"><path d="M5.500 1h4v4.500H14v4H9.500V14h-4V9.500H1v-4h4.500z" fill="#c8ea3c" stroke="#3d7a12" stroke-width="1.400"/></svg>Νέα</button>
      <button class="ml-[9px] flex items-center gap-[3px] text-[#a9a9a9]" disabled><svg class="size-[15px]" viewBox="0 0 15 15"><path d="M5 0h5v5h5v5h-5v5H5v-5H0V5h5z" fill="#f2a5ad"/></svg>Αντιγραφή</button>
      <div class="mr-[6px] ml-auto h-5 w-px bg-[#c8c8c8]"></div>
      <button aria-label="Όλα"><svg class="size-[17px]"><use href="#zoomfit"/></svg></button>
      <button class="ml-1" aria-label="Παράθυρο"><svg class="size-[17px]"><use href="#zoomwin"/></svg></button>
      <div class="mr-[6px] ml-[7px] h-5 w-px bg-[#c8c8c8]"></div>
      <button class="pr-px pb-2" aria-label="Περισσότερα"><svg class="h-[6px] w-[9px]" viewBox="0 0 9 6" fill="none" stroke="#777"><path d="M1 .5L3.500 3 1 5.500M5 .5L7.500 3 5 5.500"/></svg></button>
    </div>
    <div class="mt-[3px] mr-1 ml-2 flex h-[221px] shrink-0 justify-center border border-[#666] bg-white">
      <svg class="h-full w-[202px] text-[14px]" viewBox="0 0 202 219" fill="none"><path d="M13.500 22.500h174v174h-174z" stroke="#ffc000"/><path d="M11.500 20.500h4v4h-4zM98.500 20.500h4v4h-4zM185.500 20.500h4v4h-4zM11.500 107.500h4v4h-4zM185.500 107.500h4v4h-4zM11.500 194.500h4v4h-4zM98.500 194.500h4v4h-4zM185.500 194.500h4v4h-4z" fill="#ffc000"/><path d="M96.500 105.500h8v8h-8zM100.500 105V54M105 109.500h51" stroke="#f00"/><text x="151" y="123" fill="#f00">3</text><text transform="translate(114 59) rotate(-90)" fill="#f00">2</text></svg>
    </div>
    <div class="mt-[3px] mr-1 ml-2 flex h-[45px] shrink-0 justify-center border border-[#666] bg-white">
      <svg class="h-[43px] w-[214px] text-[12px]" viewBox="0 0 214 43" fill="none"><path d="M5.500 5.500h202v32H5.500z" stroke="#009fc7"/><path d="M1 1h9v9H1zM203 1h9v9h-9zM1 33h9v9H1zM203 33h9v9h-9z" fill="#c29b00"/><path d="M1.500 17.500h8v8h-8zM203.500 17.500h8v8h-8z" fill="#f00" stroke="#c29b00"/><text x="106" y="33" text-anchor="middle" fill="#000">Εισαγωγή Δοκού</text></svg>
    </div>
    <div class="mt-1 mr-1 ml-2 flex shrink-0 text-black">
      <div class="flex w-[374px] flex-col gap-[5px]">
        <button class="flex h-[34px] items-center rounded border border-[#c3c3c3] bg-white pr-1 pl-1 text-left text-[12px]" aria-haspopup="listbox"><svg class="mr-[10px] size-8" viewBox="0 0 32 32"><path d="M11 4l9-3 11 9-1 9-11 2z" fill="#c98d63"/><path d="M11 4l4-1 11 9-3 8-5-2z" fill="#e3ad80"/><path d="M1 16l9-4 10 7-8 6-10-4z" fill="#e9b88c"/><path d="M1 16l3 2v6l-3-2zM17 21l11-2v7l-9 5-4-3z" fill="#c98660"/><path d="M20 12l11-3v9l-11 3z" fill="#b9744d"/><path d="M3 19l11 5M5 15l11 6M14 6l9 9" stroke="#b9794f" fill="none" stroke-width=".8"/><path d="M15 23l7 1v7h-7z" fill="#edc39c"/></svg><span class="flex-1"><b class="block">Ξύλινες Διατομές</b><span class="block">Ξύλινα Μέλη</span></span><svg class="h-[5px] w-2"><use href="#tri"/></svg></button>
        <button class="flex h-[34px] items-center justify-between rounded border border-[#c3c3c3] bg-white pr-1 pl-[13px]" aria-haspopup="listbox" aria-label="Υλικό"><svg class="size-[26px]" viewBox="0 0 26 26"><path d="M.5.500h16v24H.5z" fill="#f0a640" stroke="#333"/><path d="M3 6q4-2 5-5M9 7q4-2 5-6" stroke="#b56e1a" fill="none"/></svg><svg class="h-[5px] w-2"><use href="#tri"/></svg></button>
        <button class="flex h-[34px] items-center justify-end rounded border border-[#c3c3c3] bg-white pr-1" aria-haspopup="listbox" aria-label="Τύπος"><svg class="h-[5px] w-2"><use href="#tri"/></svg></button>
      </div>
      <div class="ml-1 flex flex-1 flex-col">
        <div class="flex h-[39px] items-start">
          <label class="flex items-center gap-[2px] pt-1"><input type="checkbox" class="size-[13px] appearance-none rounded-[3px] border border-[#666] bg-white">φ(°)=</label>
          <span class="ml-auto flex"><input aria-label="Γωνία φ" disabled value="0.0" class="h-5 w-[53px] border border-[#666] bg-[#efefef] pr-px text-right text-[#888]"><span class="flex w-[14px] flex-col items-center justify-around border border-l-0 border-[#bbb] bg-[#f1f1f1]"><svg class="h-[3px] w-[5px]" viewBox="0 0 8 5"><path d="M0 5h8L4 0z" fill="#888"/></svg><svg class="h-[3px] w-[5px]" viewBox="0 0 8 5"><path d="M0 0h8L4 5z" fill="#888"/></svg></span></span>
        </div>
        <label class="flex h-[39px] items-start gap-px pt-1"><input type="checkbox" class="mt-px size-[13px] appearance-none rounded-[3px] border border-[#666] bg-white">Αλλαγή Πάνω</label>
        <label class="flex items-start gap-px pt-1"><input type="checkbox" class="mt-px size-[13px] appearance-none rounded-[3px] border border-[#666] bg-white">Αλλαγή Κάτω</label>
      </div>
    </div>
    <div class="mt-1 mr-1 flex shrink-0 justify-end"><input aria-label="Φίλτρο" class="h-6 w-[180px] border border-[#666] bg-white"></div>
    <div class="relative mt-[2px] mr-1 ml-2 flex min-h-0 flex-1 flex-col justify-end overflow-hidden border border-l-0 border-[#666] bg-[#f1f1f1]">
      <table id="tblS" class="w-[286px] table-fixed border-collapse text-black"></table>
      <div class="absolute inset-y-0 left-0 w-px bg-[#666]"></div>
      <div class="absolute inset-y-0 right-0 w-[17px] border-l border-white"><div class="absolute top-[2px] right-2 h-[260px] w-[2px] bg-[#888]"></div></div>
    </div>
    <div class="ml-1 flex h-2 shrink-0 items-center justify-center gap-[3px] bg-[#cbcbcb]"><i class="size-[3px] bg-white"></i><i class="size-[3px] bg-white"></i><i class="size-[3px] bg-white"></i><i class="size-[3px] bg-white"></i><i class="size-[3px] bg-white"></i><i class="size-[3px] bg-white"></i><i class="size-[3px] bg-white"></i><i class="size-[3px] bg-white"></i><i class="size-[3px] bg-white"></i><i class="size-[3px] bg-white"></i></div>
    <div class="ml-1 flex h-[31px] shrink-0 items-center justify-end bg-[#f1f1f1] pr-[2px]">
      <button class="flex h-[29px] w-[26px] items-center justify-center" aria-label="Πληροφορίες"><svg class="size-4" viewBox="0 0 16 16"><path d="M7 0h3v3H7zM5 5h5v8h2v2H5v-2h2V7H5z" fill="#ffe600" stroke="#6a5d00" stroke-width=".6"/></svg></button>
      <button class="flex h-[29px] w-[26px] items-center justify-center" aria-label="Στρώσεις"><svg class="size-4" viewBox="0 0 16 16"><path d="M1 3l7-2 7 2-7 2z" fill="#dfe6ef" stroke="#2c3a50" stroke-width=".8"/><path d="M1 4.500l7 2 7-2v2l-7 2.500-7-2zM1 8.500l7 2 7-2v2L8 13l-7-2zM1 12l7 2 7-2v1.500l-7 2-7-2z" fill="#5f728f" stroke="#2c3a50" stroke-width=".8"/></svg></button>
      <button class="flex h-[29px] w-6 items-center justify-center bg-[#c9c9c9]" aria-label="Προσθήκη"><svg class="size-4" viewBox="0 0 16 16"><path d="M1.500 1.500h4v8h8v5h-12z" fill="#aaa" stroke="#000" stroke-width="1.300"/><path d="M11 0v8M7 4h8" stroke="#1da33c" stroke-width="2.500"/></svg></button>
      <button class="flex h-[29px] w-[26px] items-center justify-center" aria-label="Κόμβος"><svg class="size-4" viewBox="0 0 16 16" fill="none"><path d="M9 3.500H1.500v11h11V8" stroke="#000" stroke-width="1.300"/><circle cx="7" cy="9" r="2.500" stroke="#f00" stroke-width="1.300"/><path d="M7 5v8M3 9h8" stroke="#f00"/><path d="M12 0v8M8 4h8" stroke="#1da33c" stroke-width="2.500"/></svg></button>
      <button class="flex h-[29px] w-[26px] items-center justify-center" aria-label="Διάγραμμα"><svg class="size-4" viewBox="0 0 16 16" fill="none"><path d="M2 3q4 1 5 5t8 4v3H2z" fill="#e3b8c8"/><path d="M1.500 2v13H15M2 3q4 1 5 5t8 4M2 7q5 6 13 7" stroke="#222"/><path d="M10.500 5V1.500l3 3V1" stroke="#000"/></svg></button>
      <button class="flex h-[29px] w-[26px] items-center justify-center" aria-label="Ιστόγραμμα"><svg class="size-4" viewBox="0 0 16 16"><path d="M3 14l3-5v5z" fill="#0cf"/><path d="M6 9l4-2v7H6z" fill="#6d3"/><path d="M10 7h5v7h-5z" fill="#f41"/><path d="M1.500 1v13.500H15M5.500 1v12M9.500 2v12" stroke="#222" fill="none"/></svg></button>
      <button class="flex h-[29px] w-[26px] items-center justify-center" aria-label="Δοκός"><svg class="size-4" viewBox="0 0 16 16"><path d="M6 2l6-1 1 3-3 6H4z" fill="#a5431a"/><path d="M4 10l2-8" stroke="#2aa" stroke-width="1.300"/><path d="M1 12.500h13M3 14.500l8-4M10 10l3 4" stroke="#333" stroke-width="1.300"/></svg></button>
      <button class="flex h-[29px] w-[26px] items-center justify-center" aria-label="Χρώματα"><svg class="size-4" viewBox="0 0 16 16" fill="none"><path d="M6 2H2v5h4M8 1v7M10 1h3v3h-3v4M12 4l2 4" stroke="#334a7a" stroke-width="1.300"/><path d="M1 10h14v5H1z" fill="url(#gRain)"/></svg></button>
      <button class="flex h-[29px] w-[26px] items-center justify-center" aria-label="Έγγραφο"><svg class="size-4" viewBox="0 0 16 16"><path d="M3.500 1.500h7l3 3v10h-10z" fill="#f6f9fd" stroke="#3b5478" stroke-width="1.300"/><path d="M5 7h6M5 9h6" stroke="#5b84c4"/><path d="M6 10h5v3H6z" fill="#e3a64b"/></svg></button>
      <button class="flex h-[29px] w-[26px] items-center justify-center" aria-label="Σημείωση"><svg class="size-4" viewBox="0 0 16 16"><path d="M3.500 1.500h9l1 1v11l-1 1h-9l-1-1v-11z" fill="#fff" stroke="#6b1a1a" stroke-width="1.300"/><path d="M8 6l3-3M10 7l3-3" stroke="#6b1a1a" fill="none"/></svg></button>
      <button class="flex h-[29px] w-[26px] items-center justify-center" aria-label="Φύλλο"><svg class="size-4" viewBox="0 0 16 16"><path d="M2.500 1.500h12v13h-12z" fill="#fff" stroke="#000" stroke-width="1.300"/><path d="M4 4h2M4 7h2M4 10h2M4 12h2M8 4h5M8 7h5M9 9v4h4M7 1v13" stroke="#446" fill="none"/></svg></button>
      <button class="flex h-[29px] w-[26px] items-center justify-center" aria-label="Παλέτα"><svg class="size-4" viewBox="0 0 16 16"><path d="M8 8L4 1h8z" fill="#f33"/><path d="M8 8l4-7 4 7z" fill="#f5c"/><path d="M8 8h8l-4 7z" fill="#55f"/><path d="M8 8l4 7H4z" fill="#1cf"/><path d="M8 8l-4 7-4-7z" fill="#2d3"/><path d="M8 8H0l4-7z" fill="#fd2"/><circle cx="8" cy="8" r="2.500" fill="#fff" fill-opacity=".85"/></svg></button>
      <button class="flex h-[29px] w-6 flex-col items-center justify-center gap-1" aria-label="Περισσότερα"><svg class="h-[6px] w-[9px]" viewBox="0 0 9 6" fill="none" stroke="#777"><path d="M1 .5L3.500 3 1 5.500M5 .5L7.500 3 5 5.500"/></svg><svg class="h-[3px] w-[5px]" viewBox="0 0 8 5"><path d="M0 0h8L4 5z" fill="#777"/></svg></button>
    </div>
  </aside>

  <!-- Floating window -->
  <section class="absolute top-[397px] right-[197px] w-[571px] border border-[#b5b5b5] bg-[#e6e6e6] px-1 pb-[5px] shadow-[0_0_8px_rgba(0,0,0,0.35)]">
    <div class="flex h-[38px] items-center justify-between pt-[6px] pr-1 pl-px"><h2 class="text-[20px]">Παράθυρο Εργασίας 2</h2><button aria-label="Κλείσιμο"><svg class="mb-1 size-[9px]"><use href="#cross"/></svg></button></div>
    <div class="flex h-6 items-center bg-[#f1f1f1] pb-[2px] pl-3 leading-[19px]">
      <button>Επιλεγμένα</button><button class="ml-[6px] bg-[#c9c9c9] px-1">Εικονιζόμενα</button><button class="ml-[7px]">Όλα</button>
      <div class="mr-[6px] ml-[9px] h-5 w-px bg-[#c8c8c8]"></div>
      <button class="flex items-center gap-1 text-[12px]"><svg class="size-4"><use href="#export"/></svg>Εξαγωγή Τεύχους Προμέτρησης</button>
    </div>
    <div class="relative border border-t-0 border-l-0 border-[#666] bg-[#f1f1f1] pb-[17px]">
      <table id="tblB" class="-mt-px w-[530px] table-fixed border-collapse text-black"></table>
      <div class="absolute inset-x-0 top-0 h-px bg-[#666]"></div>
      <div class="absolute inset-y-0 left-0 w-px bg-[#666]"></div>
    </div>
  </section>
</main>

<!-- Status bar -->
<footer class="flex h-5 shrink-0 items-center border-t border-[#c8c8c8] bg-[#f1f1f1] pt-[3px] whitespace-nowrap">
  <a href="#" class="w-[449px] pl-[2px]">www.tol.com.gr</a>
  <button class="flex items-center gap-1" aria-label="Πίνακες"><svg class="size-[15px]"><use href="#mini"/></svg><svg class="h-[6px] w-2"><use href="#chev"/></svg></button>
  <svg class="ml-1 h-3 w-4" viewBox="0 0 16 12"><path d="M6 1.500h10M6 4.500h10M0 7.500h16M0 10.500h16M0 2.500h5" stroke="#1c46b5" stroke-width="1.500"/><path d="M2.500 0v6" stroke="#1c46b5"/></svg>
  <span class="ml-[15px] w-[457px]">ΕΥΡΩΚΩΔΙΚΕΣ | Ιδιομορφική | Κ.Π.Μ. | q=3.50 | Σχεδιασμού | Τύπος 1</span>
  <span>Αποτίμηση-Ενισχύσεις | q-Καθολ.Συντ.Συμπ. | ΟΣ: ΕΚ8-3 | ΦΤ: ΚΑΔΕΤ</span>
  <svg class="ml-[50px] h-3 w-3" viewBox="0 0 12 12"><path d="M3.500 6V3.500a2.500 2.500 0 0 1 5 0V6" fill="none" stroke="#8a8a8a" stroke-width="1.500"/><path d="M1.500 5.500h9v6h-9z" fill="#e5ab35" stroke="#8c6413"/><path d="M6 7.500v2" stroke="#5c3f08"/></svg>
  <div class="ml-auto flex items-center">
    <button class="flex items-center gap-[7px]">κάναβος<svg class="h-[6px] w-2"><use href="#chev"/></svg></button>
    <button class="ml-[6px]">έλξη</button>
    <button class="ml-[9px] h-4 border border-[#2b579a] bg-[#c9c9c9] px-[3px] leading-[14px]">dxf</button>
    <button class="ml-1">έλξη</button>
    <button class="ml-3">κάθετα</button>
    <button class="ml-[14px]" aria-label="Σμίκρυνση"><svg class="size-2" viewBox="0 0 8 8"><path d="M0 4h8" stroke="#999" stroke-width="2"/></svg></button>
    <input type="range" aria-label="Ζουμ" value="50" class="mx-[11px] h-4 w-[88px] appearance-none bg-transparent [&::-webkit-slider-runnable-track]:h-px [&::-webkit-slider-runnable-track]:bg-[#999] [&::-webkit-slider-thumb]:-mt-[7px] [&::-webkit-slider-thumb]:h-[14px] [&::-webkit-slider-thumb]:w-[5px] [&::-webkit-slider-thumb]:appearance-none [&::-webkit-slider-thumb]:bg-[#777]">
    <button class="mr-1" aria-label="Μεγέθυνση"><svg class="size-2" viewBox="0 0 8 8"><path d="M0 4h8M4 0v8" stroke="#999" stroke-width="2"/></svg></button>
  </div>
</footer>

<script>
const use = (id, cls) => `<svg class="${cls}"><use href="#${id}"/></svg>`;
const guides = g => [...g].map(c => c === ' ' ? '<span class="w-[17px] shrink-0"></span>' : use('g' + c, 'size-[17px] shrink-0')).join('');

/* Display tree: [guides, control, icon, text, state] */
const view = [
  ['c','x','folder','Γενικά'],['c','x','folder','Μοντέλο'],['c','X','folder','Φορτία'],['c','x','folder','Οπλισμοί'],
  ['c','x','folder','Αποτελέσματα'],['o','x','folder','Ενέργειες'],[' O','x','gridY','Εμφανιζόμενα Στοιχεία'],
  [' vh','x','gridY','Όλα'],[' vh','x','gridTL','Εμφάνιση μόνο των Επιλεγμένων','off'],[' vh','x','gridBR','Απόκρυψη Επιλεγμένων','off'],
  [' vh','x','near','Γειτονικά'],[' vh','R','page','Απόκρυψη μη ορατών','sel'],[' vh','r','page','Εμφάνιση μη ορατών με ίδιο χρώμα'],
  [' vh','r','page','Εμφάνιση μη ορατών με πιο αχνό χρώμα'],[' vh','x','page','Μη ορατά στην Εμφάνιση Όλων (Zoom Extents)'],
  [' vh','x','page','Απλοποιημένη Εμφάνιση Διατομών']];
document.getElementById('treeView').innerHTML = view.map(([g, k, icon, t, s]) => {
  const radio = k === 'r' || k === 'R';
  const on = k === 'R' || k === 'X' ? 'checked' : '';
  const box = radio
    ? `<input type="radio" name="hid" ${on} class="size-[11px] appearance-none rounded-full border border-[#999] bg-white checked:bg-[#444] checked:shadow-[inset_0_0_0_2px_#fff]">`
    : `<input type="checkbox" ${on} class="size-[11px] appearance-none border border-[#adadad] bg-white">`;
  const tick = k === 'X' ? '<svg class="absolute inset-0 size-[11px]" viewBox="0 0 11 11"><path d="M2 5.500L4.500 8 9 3" fill="none" stroke="#555" stroke-width="1.500"/></svg>' : '';
  const tone = s === 'off' ? 'text-[#9a9a9a]' : s === 'sel' ? 'text-[#444] bg-[#efefef] w-[379px]' : '';
  return `<li><label class="flex h-[17px] items-center whitespace-nowrap">${guides(g)}<span class="relative mr-[4px] ml-[3px] flex size-[11px] shrink-0">${box}${tick}</span><span class="flex h-[17px] items-center gap-[2px] pl-[2px] ${tone}">${use(icon, 'size-4 shrink-0')}${t}</span></label></li>`;
}).join('');

const nav = [
  ['c','folder','Βιβλιοθήκες','B'],['c','folder','Δεδομένα'],['c','folder','Αποτελέσματα'],['o','folder','Οπλισμοί-Προμετρήσεις'],
  [' h','doc','Σκυρόδεμα-Ξυλότυπος'],[' C','folder','Χάλυβας Οπλισμού'],[' C','folder','Δομικός Χάλυβας'],[' O','folder','Δομική Ξυλεία'],
  [' vh','doc','Ανά Στοιχείο'],[' vl','doc','Συγκεντρωτικά','sel'],[' O','folder','ΙΟΠ'],[' vh','doc','Ελάσματα'],[' vl','doc','Υφάσματα'],
  [' l','sumdoc','Τεύχος Προμέτρησης'],['c','folder','Τεύχος Μελέτης'],['c','folder','Μη Γραμμική Ανάλυση Θεμελίωσης'],['c','folder','Δευτεροβάθμιος Προσεισμικός Έλεγχος']];
document.getElementById('treeNav').innerHTML = nav.map(([g, icon, t, s]) =>
  `<li class="flex h-[17px] items-center whitespace-nowrap">${guides(g)}<a href="#" class="relative ml-px flex h-[17px] items-center gap-[2px] pl-[2px] ${s === 'sel' ? 'mr-[2px] flex-1 bg-[#efefef]' : ''}">${use(icon, 'size-4')}${s === 'B' ? '<b class="absolute left-[7px] text-[9px] text-black">B</b>' : ''}${t}</a></li>`).join('');

/* Quantity tables */
const H = 'border border-black bg-[#f1f1f1] font-normal p-0';
const N = 'border border-t-black border-b-black border-r-black border-l-[#666] bg-[#f1f1f1] text-right pr-[2px] p-0';
const D = 'border border-[#666] bg-white px-[2px] pt-0 pb-px';
const cols = w => '<colgroup>' + w.map(x => `<col style="width:${x}px">`).join('') + '</colgroup>';
const membersA = [['Δ4405','1.50','0.0462','11.55'],['Δ4431','2.00','0.0615','15.37'],['Δ4432','1.50','0.0462','11.55'],['Δ4421','2.00','0.0615','15.37'],['Δ4404','2.00','0.0615','15.37'],['Δ4423','1.50','0.0462','11.55'],['Δ4403','2.00','0.0615','15.37'],['Δ5106','2.00','0.0616','15.40'],['Δ5753','4.34','0.1337','33.41'],['Δ5648','4.34','0.1337','33.41'],['Δ4988','2.27','0.0698','17.46'],['Δ5711','4.34','0.1337','33.41'],['Δ5093','2.27','0.0698','17.46'],['Δ5681','4.34','0.1337','33.41']];
document.getElementById('tblA').innerHTML = cols([29,297,100,80,80,80]) +
  `<thead><tr class="h-5"><th colspan="6" class="${H}">Προμέτρηση Ξυλείας</th></tr>
  <tr class="h-[30px]"><th rowspan="2" class="${H}">α/α</th><th rowspan="2" class="${H}">Δομικό Στοιχείο</th><th rowspan="2" class="${H}">Διατομή</th><th class="${H}">Μήκος</th><th class="${H}">Όγκος</th><th class="${H}">Κόστος</th></tr>
  <tr class="h-5"><th class="${H}">m</th><th class="${H}">m³</th><th class="${H}">€</th></tr></thead><tbody>` +
  membersA.map((r, i) => `<tr class="h-5"><td class="${N}">${i + 17}</td><td class="${D}">Ξύλινο Στοιχείο ${r[0]}-Σ2</td><td class="${D}">TR22/14</td><td class="${D} text-right">${r[1]}</td><td class="${D} text-right">${r[2]}</td><td class="${D} text-right">${r[3]}</td></tr>`).join('') +
  `<tr class="h-5 font-bold"><td class="${N}">31</td><td class="${D}">Μερικό Σύνολο Ομάδας: Ξύλινα Στοιχεία</td><td class="${D}"></td><td class="${D}"></td><td class="${D} text-right">2.3140</td><td class="${D} text-right">578.49</td></tr>
  <tr class="h-5 font-bold"><td class="${N}">32</td><td class="${D} text-right">ΣΥΝΟΛΟ</td><td class="${D}"></td><td class="${D}"></td><td class="${D} text-right">2.3140</td><td class="${D} text-right">578.49</td></tr></tbody>`;

const rowsB = [['4.07','4','0.1254','0.5017','125.41'],['1.86','3','0.0573','0.1719','42.97'],['2.00','8','0.0615','0.4919','122.97'],['1.70','2','0.0524','0.1047','26.18'],['2.00','3','0.0616','0.1848','46.20'],['1.50','4','0.0462','0.1848','46.20'],['4.34','4','0.1337','0.5346','133.65'],['2.27','2','0.0698','0.1397','34.91'],['3.99','8','0.1230','0.9838','245.94'],['7.40','4','0.2279','0.9117','227.92']];
document.getElementById('tblB').innerHTML = cols([30,100,80,80,80,80,80]) +
  `<thead><tr class="h-5"><th colspan="7" class="${H}">Προμέτρηση Ξυλείας</th></tr>
  <tr class="h-[30px]"><th rowspan="2" class="${H}">α/α</th><th rowspan="2" class="${H}">Διατομή</th><th class="${H}">Μήκος</th><th class="${H}">Τεμάχια</th><th class="${H} leading-[14px]">Όγκος<br>τεμαχίου</th><th class="${H} leading-[14px]">Συνολικός<br>όγκος</th><th class="${H}">Κόστος</th></tr>
  <tr class="h-5"><th class="${H}">m</th><th class="${H}">-</th><th colspan="2" class="${H}">m³</th><th class="${H}">€</th></tr></thead><tbody>` +
  rowsB.map((r, i) => `<tr class="h-5"><td class="${N}">${i + 1}</td><td class="${D}">TR22/14</td>` + r.map(v => `<td class="${D} text-right">${v}</td>`).join('') + '</tr>').join('') +
  `<tr class="h-5 font-bold"><td class="${N}">11</td><td class="${D} text-right">ΣΥΝΟΛΟ</td><td class="${D}"></td><td class="${D}"></td><td class="${D}"></td><td class="${D} text-right">4.2094</td><td class="${D} text-right">1052.35</td></tr></tbody>`;

document.getElementById('tblS').innerHTML = cols([15,18,90,18,70,50,25]) + '<tbody>' +
  ['TR18/10','TR18/12','TR18/18','TR18/6','TR18/8','TR20/10','TR20/12','TR20/14','TR20/16','TR20/18'].map(t =>
  `<tr class="h-[18px]"><td class="${N}"></td><td class="${D}"></td><td class="${D} leading-[14px]">${t}</td><td class="${D}"></td><td class="${D}"></td><td class="${D}"></td><td class="border border-[#666] bg-[#f1f1f1] p-0"><button class="mx-px block h-[15px] w-[22px] rounded border border-[#c8c8c8] bg-white leading-[12px] font-bold">...</button></td></tr>`).join('') +
  '<tr class="h-[3px]">' + `<td class="border border-[#666] bg-white p-0"></td>`.repeat(7) + '</tr></tbody>';

/* Member labels on the model: [x, y, angle, text] */
const out = [];
[['Δ4427','Δ4428','Δ5105'],['Δ4418','Δ4417','Δ5106'],['Δ4409','Δ4408','Δ5107'],['Δ4400','Δ4399','']].forEach((n, k) => {
  const x = k * 129, y = k * -28;
  out.push([183 + x, 135 + y, 23, n[0]], [231 + x, 156 + y, 23, n[1]], [203 + x, 194 + y, 57, 'Δ4430'], [229 + x, 200 + y, 70, 'Δ5425'], [258 + x, 252 + y, -90, 'Δ4433'],
    [279 + x, 222 + y, 68, 'Δ5434'], [302 + x, 320 + y, 60, 'Δ4405'], [325 + x, 326 + y, 66, 'Δ5325'], [280 + x, 264 + y, 26, 'Δ4421']);
  if (n[2]) out.push([320 + x, 243 + y, -13, n[2]]);
});
out.push([150,160,4,'Δ5648'],[153,202,26,'Δ5649'],[205,230,-60,'Δ4988'],[200,269,-12,'Δ4989'],[256,300,-88,'Δ5204'],[256,342,-88,'Δ5681'],[650,65,-86,'Δ5753'],[695,112,32,'Δ5093'],[690,159,-12,'Δ5094'],[744,176,48,'Δ5711'],[744,220,28,'Δ5712'],[328,155,-13,'Δ4435'],[457,128,-13,'Δ4426'],[586,99,-13,'Δ4411']);
document.getElementById('beamLabels').innerHTML = out.map(([x, y, a, t]) => `<text transform="translate(${x} ${y}) rotate(${a})">${t}</text>`).join('');
</script>
</body>
</html>
